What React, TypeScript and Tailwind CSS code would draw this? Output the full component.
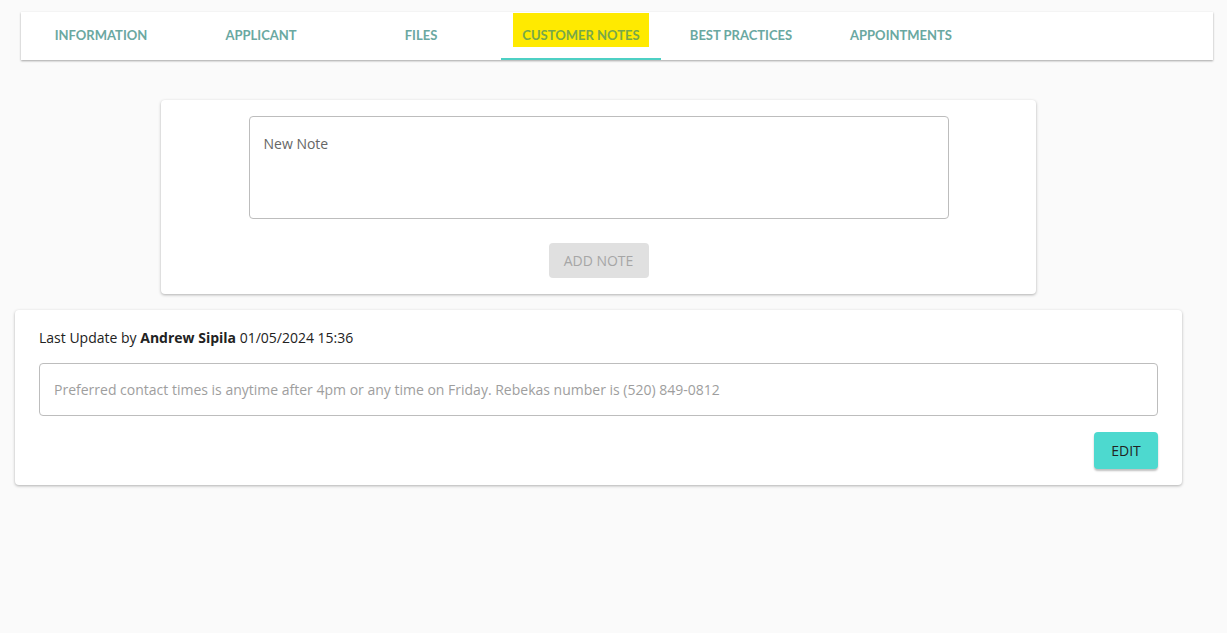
export default function App() {
  const tabs = ["INFORMATION", "APPLICANT", "FILES", "CUSTOMER NOTES", "BEST PRACTICES", "APPOINTMENTS"];
  return (
    <div className="min-h-[633px] bg-[#fafafa] pt-3" style={{ fontFamily: '"Open Sans", sans-serif' }}>
      <div className="ml-[21px] w-[1192px] h-[48px] bg-white flex shadow-[0_1px_2px_rgba(0,0,0,0.35)]">
        {tabs.map((t, i) => (
          <div key={t} className="w-[160px] h-full flex items-center justify-center relative">
            <span
              className={`text-[13px] font-bold text-[#6aa8a1] ${i === 3 ? "bg-[#ffea00] px-[9px] h-[34px] -mt-[12px] pt-[12px] flex items-center text-[#77a84a]" : ""}`}
              style={{ fontFamily: "Lato, sans-serif" }}
            >
              {t}
            </span>
            {i === 3 && <div className="absolute left-0 right-0 bottom-0 h-[2px] bg-[#4dd0c4]" />}
          </div>
        ))}
      </div>
      <div className="ml-[161px] mt-[40px] w-[875px] bg-white rounded shadow-[0_1px_3px_rgba(0,0,0,0.3)] pt-4 pb-4 flex flex-col items-center">
        <div className="w-[700px] h-[103px] border border-[#bdbdbd] rounded px-[14px] pt-[16px] text-[14px] text-[#666]">New Note</div>
        <div className="mt-6 w-[100px] h-[35px] bg-[#e0e0e0] rounded text-[14px] text-[#a6a6a6] flex items-center justify-center">ADD NOTE</div>
      </div>
      <div className="ml-[15px] mt-[16px] w-[1167px] bg-white rounded shadow-[0_1px_3px_rgba(0,0,0,0.3)] px-6 pt-[17px] pb-4">
        <div className="text-[14px] text-[#222]">Last Update by <b>Andrew Sipila</b> 01/05/2024 15:36</div>
        <div className="mt-[15px] h-[53px] border border-[#bdbdbd] rounded px-[14px] flex items-center text-[14px] text-[#9e9e9e]">
          Preferred contact times is anytime after 4pm or any time on Friday. Rebekas number is (520) 849-0812
        </div>
        <div className="flex justify-end mt-[16px]">
          <div className="w-[64px] h-[37px] bg-[#4dd9cf] rounded text-[14px] text-[#222] flex items-center justify-center shadow-[0_2px_2px_rgba(0,0,0,0.25)]">EDIT</div>
        </div>
      </div>
    </div>
  );
}
